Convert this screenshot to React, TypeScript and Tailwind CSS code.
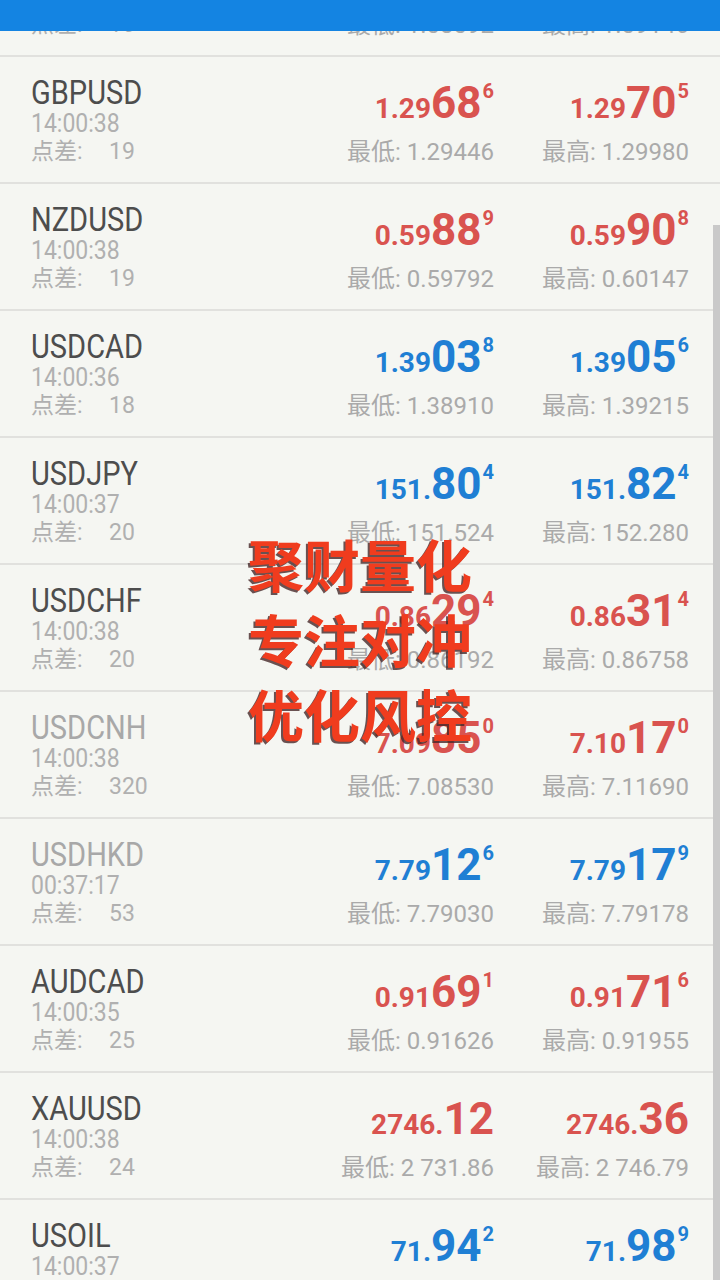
import React from "react";

type Row = {
  sym: string;
  time: string;
  spread: string;
  dim?: boolean;
  color: "red" | "blue";
  bid: [string, string, string?];
  ask: [string, string, string?];
  low: string;
  high: string;
};

const rows: Row[] = [
  { sym: "EURUSD", time: "14:00:38", spread: "16", color: "red", bid: ["1.08", "59", "2"], ask: ["1.08", "60", "8"], low: "1.08092", high: "1.09146" },
  { sym: "GBPUSD", time: "14:00:38", spread: "19", color: "red", bid: ["1.29", "68", "6"], ask: ["1.29", "70", "5"], low: "1.29446", high: "1.29980" },
  { sym: "NZDUSD", time: "14:00:38", spread: "19", color: "red", bid: ["0.59", "88", "9"], ask: ["0.59", "90", "8"], low: "0.59792", high: "0.60147" },
  { sym: "USDCAD", time: "14:00:36", spread: "18", color: "blue", bid: ["1.39", "03", "8"], ask: ["1.39", "05", "6"], low: "1.38910", high: "1.39215" },
  { sym: "USDJPY", time: "14:00:37", spread: "20", color: "blue", bid: ["151.", "80", "4"], ask: ["151.", "82", "4"], low: "151.524", high: "152.280" },
  { sym: "USDCHF", time: "14:00:38", spread: "20", color: "red", bid: ["0.86", "29", "4"], ask: ["0.86", "31", "4"], low: "0.86192", high: "0.86758" },
  { sym: "USDCNH", time: "14:00:38", spread: "320", dim: true, color: "red", bid: ["7.09", "85", "0"], ask: ["7.10", "17", "0"], low: "7.08530", high: "7.11690" },
  { sym: "USDHKD", time: "00:37:17", spread: "53", dim: true, color: "blue", bid: ["7.79", "12", "6"], ask: ["7.79", "17", "9"], low: "7.79030", high: "7.79178" },
  { sym: "AUDCAD", time: "14:00:35", spread: "25", color: "red", bid: ["0.91", "69", "1"], ask: ["0.91", "71", "6"], low: "0.91626", high: "0.91955" },
  { sym: "XAUUSD", time: "14:00:38", spread: "24", color: "red", bid: ["2746.", "12"], ask: ["2746.", "36"], low: "2 731.86", high: "2 746.79" },
  { sym: "USOIL", time: "14:00:37", spread: "5", color: "blue", bid: ["71.", "94", "2"], ask: ["71.", "98", "9"], low: "71.420", high: "72.150" },
];

function Price({ p, color }: { p: [string, string, string?]; color: "red" | "blue" }) {
  return (
    <div
      className={
        "h-[44px] whitespace-nowrap text-right text-[44px] font-bold leading-[44px] " +
        (color === "red" ? "text-[#d9534f]" : "text-[#1f7fd4]")
      }
    >
      <span className="text-[28px]">{p[0]}</span>
      <span>{p[1]}</span>
      {p[2] ? <span className="ml-[1px] align-top text-[20px] leading-none">{p[2]}</span> : null}
    </div>
  );
}

function QuoteRow({ r }: { r: Row }) {
  return (
    <div className="flex h-[127px] border-b-2 border-[#e1e1de] pl-[31px] pr-[31px]">
      <div className="flex-1 pt-[21px]">
        <div className="h-[30px] leading-[30px]">
          <span
            className={
              "inline-block origin-left scale-x-[0.88] text-[33px] " +
              (r.dim ? "text-[#a8a8a8]" : "text-[#4d4d4d]")
            }
          >
            {r.sym}
          </span>
        </div>
        <div className="h-[32px] leading-[32px]">
          <span className="inline-block origin-left scale-x-[0.92] text-[25px] text-[#b0b0b0]">{r.time}</span>
        </div>
        <div className="flex text-[23px] leading-[24px] text-[#b0b0b0]">
          <span className="w-[78px]">点差:</span>
          <span>{r.spread}</span>
        </div>
      </div>
      <div className="w-[195px] pt-[24px]">
        <Price p={r.bid} color={r.color} />
        <div className="mt-[12px] whitespace-nowrap text-right text-[24px] leading-[30px] text-[#aaaaaa]">最低: {r.low}</div>
      </div>
      <div className="w-[195px] pt-[24px]">
        <Price p={r.ask} color={r.color} />
        <div className="mt-[12px] whitespace-nowrap text-right text-[24px] leading-[30px] text-[#aaaaaa]">最高: {r.high}</div>
      </div>
    </div>
  );
}

export default function App() {
  return (
    <div className="relative flex h-[1280px] w-[720px] flex-col overflow-hidden bg-[#f5f6f2] font-['Roboto','Noto_Sans_CJK_SC',sans-serif]">
      <div className="relative z-10 h-[31px] shrink-0 bg-[#1484e2]" />
      <div className="flex-1 overflow-hidden">
        <div className="-mt-[101px]">
          {rows.map((r) => (
            <QuoteRow key={r.sym} r={r} />
          ))}
        </div>
      </div>
      <div className="absolute bottom-0 right-0 top-[225px] w-[7px] bg-[#c9c9c9]" />
      <div className="absolute left-0 right-0 top-[525px] text-center font-['Noto_Sans_CJK_SC',sans-serif] text-[56px] font-bold leading-[75px] text-[#f03c1e] [text-shadow:-2px_2px_0_rgba(70,40,40,0.8)]">
        <div>聚财量化</div>
        <div>专注对冲</div>
        <div>优化风控</div>
      </div>
    </div>
  );
}
